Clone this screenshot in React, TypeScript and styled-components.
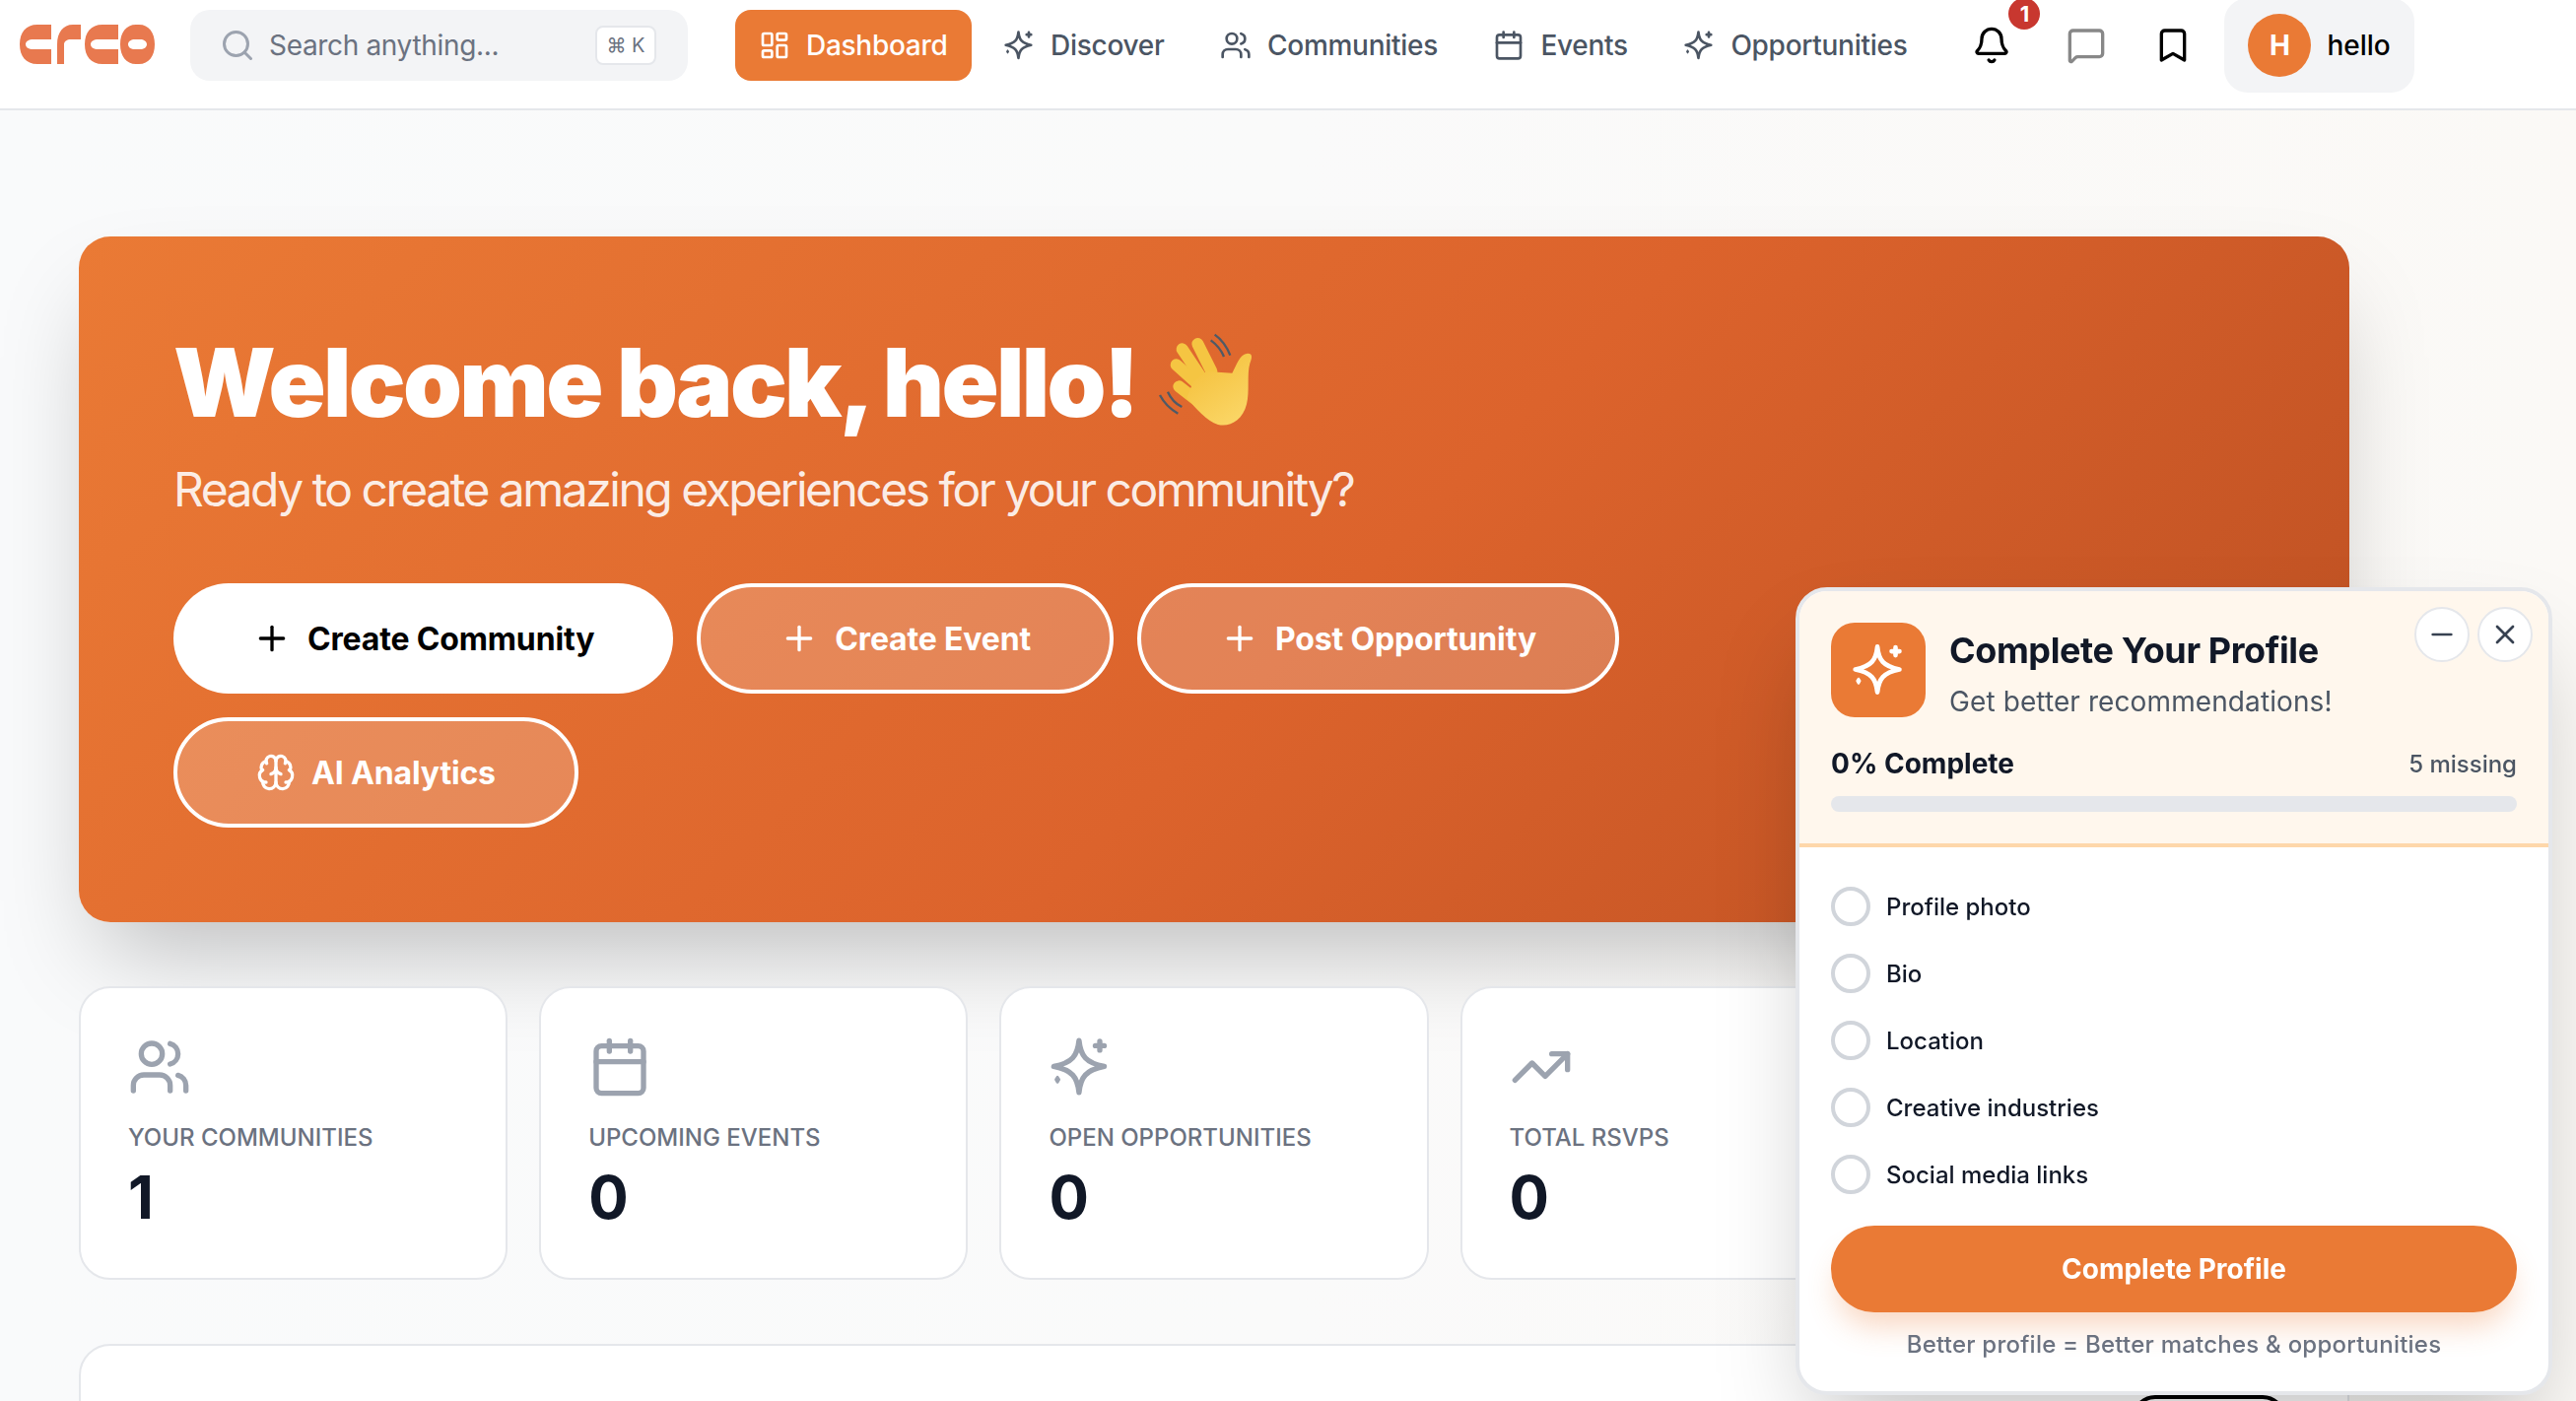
import React, { FC, ReactElement, ReactNode } from "react"
import styled, { createGlobalStyle } from "styled-components"
import { Bell, Bookmark, Brain, Calendar, LayoutDashboard, MessageSquare, Minus, Plus, Search, TrendingUp, Users, X } from "lucide-react"

const GlobalStyle = createGlobalStyle`
  html, body {
    margin: 0;
    padding: 0;
    height: 100%;
    overflow: hidden;
    background: #fafafa;
    font-family: Inter, "Noto Sans", sans-serif;
  }
  * {
    box-sizing: border-box;
  }
`

const SparkleIcon: FC<{ size: number }> = ({ size }) => (
  <svg viewBox="0 0 24 24" width={size} height={size} fill="none" stroke="currentColor" strokeWidth="2" strokeLinecap="round" strokeLinejoin="round">
    <path d="M11.6 1.9C12.2 7.8 14.2 10.4 21.2 11.8C14.2 13.2 12.2 15.8 11.6 21.7C11 15.8 9 13.2 2 11.8C9 10.4 11 7.8 11.6 1.9Z" />
    <path d="M19.5 2.2v3.4M17.8 3.9h3.4" />
    <path d="M3.4 15.8l.6 1-.6 1-.6-1z" fill="currentColor" strokeWidth="1" />
  </svg>
)

const NAV_ITEMS = [
  { label: "Discover", icon: <SparkleIcon size={32} /> },
  { label: "Communities", icon: <Users size={32} /> },
  { label: "Events", icon: <Calendar size={32} /> },
  { label: "Opportunities", icon: <SparkleIcon size={32} /> },
]

const STATS = [
  { label: "Your Communities", value: "1", icon: <Users size={64} /> },
  { label: "Upcoming Events", value: "0", icon: <Calendar size={64} /> },
  { label: "Open Opportunities", value: "0", icon: <SparkleIcon size={64} /> },
  { label: "Total RSVPs", value: "0", icon: <TrendingUp size={64} /> },
]

const CHECKLIST = ["Profile photo", "Bio", "Location", "Creative industries", "Social media links"]

const Logo: FC = () => (
  <LogoMark viewBox="0 0 140 40" width="140" height="40" aria-label="crco">
    <path d="M32 0H18C6 0 0 8 0 20s6 20 18 20h14V25H14c-5 0-8-2-8-5s3-5 8-5h18z" />
    <path d="M38 40h7V20c0-3 3-5 7-5h10V0h-8C44 0 38 8 38 20z" />
    <path d="M100 0H84C72 0 66 8 66 20s6 20 18 20h16V25H80c-5 0-8-2-8-5s3-5 8-5h20z" />
    <path
      fillRule="evenodd"
      d="M102 20c0-12 6-20 16-20h3c10 0 16 8 16 20s-6 20-16 20h-3c-10 0-16-8-16-20zm8 0c0 3 3 5 7 5h5c4 0 7-2 7-5s-3-5-7-5h-5c-4 0-7 2-7 5z"
    />
  </LogoMark>
)

const WavingHand: FC = () => (
  <HandMark viewBox="0 0 375 345" width="125" height="115">
    <defs>
      <linearGradient id="hand" x1="0.2" y1="0" x2="0.8" y2="1">
        <stop offset="0" stopColor="#f4bf3a" />
        <stop offset="1" stopColor="#fbd768" />
      </linearGradient>
    </defs>
    <g fill="none" stroke="#4f5a66" strokeWidth="7">
      <path d="M215 38c24 17 38 40 47 63" />
      <path d="M203 55c19 14 32 30 40 50" />
      <path d="M48 222c12 23 32 43 55 56" />
      <path d="M72 212c8 18 23 36 43 46" />
    </g>
    <g fill="none" stroke="#f5c542" strokeWidth="36" strokeLinecap="round">
      <path d="M163 66l42 84" />
      <path d="M116 82l60 90" />
      <path d="M98 130l76 68" />
      <path d="M106 196l54 42" />
    </g>
    <path
      fill="url(#hand)"
      d="M190 150l78 5c14-24 22-58 47-60 17 0 13 15 7 30-10 35 0 85-10 125-12 50-52 70-87 62-35-12-65-47-95-82l20-50z"
    />
  </HandMark>
)

const NavLink: FC<{ icon: ReactNode; label: string; active?: boolean }> = ({ icon, label, active }) => (
  <NavItem $active={active}>
    {icon}
    {label}
  </NavItem>
)

export default function App(): ReactElement {
  return (
    <Page>
      <GlobalStyle />
      <Header>
        <Logo />
        <SearchBox>
          <Search size={36} color="#9ca3af" />
          <SearchText>Search anything...</SearchText>
          <Kbd>⌘ K</Kbd>
        </SearchBox>
        <Nav>
          <NavLink active icon={<LayoutDashboard size={32} />} label="Dashboard" />
          {NAV_ITEMS.map((item) => (
            <NavLink key={item.label} icon={item.icon} label={item.label} />
          ))}
        </Nav>
        <IconButton $left={34} $color="#000">
          <Bell size={40} />
          <Badge>1</Badge>
        </IconButton>
        <IconButton $left={40} $color="#888">
          <MessageSquare size={40} />
        </IconButton>
        <IconButton $left={32} $color="#000">
          <Bookmark size={40} />
        </IconButton>
        <ProfileChip>
          <Avatar>H</Avatar>
          hello
        </ProfileChip>
      </Header>

      <Main>
        <Hero>
          <HeroTitle>
            Welcome back, hello!
            <WavingHand />
          </HeroTitle>
          <HeroSubtitle>Ready to create amazing experiences for your community?</HeroSubtitle>
          <HeroActions>
            <HeroButton $primary>
              <Plus size={40} />
              Create Community
            </HeroButton>
            <HeroButton>
              <Plus size={40} />
              Create Event
            </HeroButton>
            <HeroButton>
              <Plus size={40} />
              Post Opportunity
            </HeroButton>
            <HeroButton>
              <Brain size={40} />
              AI Analytics
            </HeroButton>
          </HeroActions>
        </Hero>

        <StatsGrid>
          {STATS.map((stat) => (
            <StatCard key={stat.label}>
              <StatIcon>{stat.icon}</StatIcon>
              <StatLabel>{stat.label}</StatLabel>
              <StatValue>{stat.value}</StatValue>
            </StatCard>
          ))}
        </StatsGrid>

        <SectionCard>
          <OutlineButton />
        </SectionCard>
      </Main>

      <ProfilePanel>
        <PanelHead>
          <PanelControls>
            <RoundButton>
              <Minus size={32} />
            </RoundButton>
            <RoundButton>
              <X size={32} />
            </RoundButton>
          </PanelControls>
          <PanelIntro>
            <PanelIcon>
              <SparkleIcon size={56} />
            </PanelIcon>
            <PanelHeading>
              <PanelTitle>Complete Your Profile</PanelTitle>
              <PanelSubtitle>Get better recommendations!</PanelSubtitle>
            </PanelHeading>
          </PanelIntro>
          <ProgressRow>
            <ProgressLabel>0% Complete</ProgressLabel>
            <MissingLabel>5 missing</MissingLabel>
          </ProgressRow>
          <ProgressTrack />
        </PanelHead>
        <PanelBody>
          <Checklist>
            {CHECKLIST.map((item) => (
              <CheckRow key={item}>
                <CheckCircle />
                {item}
              </CheckRow>
            ))}
          </Checklist>
          <CompleteButton>Complete Profile</CompleteButton>
          <PanelFoot>Better profile = Better matches &amp; opportunities</PanelFoot>
        </PanelBody>
      </ProfilePanel>
    </Page>
  )
}

const Page = styled.div`
  height: 1422px;
  overflow: hidden;
  background: linear-gradient(to right, #f9fafb 0%, #fafafa 50%, #fbf9f6 100%);
`

const Header = styled.header`
  display: flex;
  align-items: flex-start;
  height: 112px;
  padding: 10px 0 0 20px;
  background: #fff;
  border-bottom: 2px solid #e5e7eb;
`

const LogoMark = styled.svg`
  flex-shrink: 0;
  margin: 15px 33px 0 0;
  fill: #e8794f;
`

const SearchBox = styled.div`
  display: flex;
  align-items: center;
  gap: 14px;
  width: 505px;
  height: 72px;
  padding: 0 32px 0 30px;
  margin-right: 48px;
  background: #f3f4f6;
  border-radius: 20px;
`

const SearchText = styled.span`
  flex: 1;
  font-size: 28px;
  letter-spacing: -0.012em;
  color: #6b7280;
`

const Kbd = styled.span`
  display: flex;
  align-items: center;
  justify-content: center;
  width: 62px;
  height: 40px;
  background: #fff;
  border: 2px solid #e5e7eb;
  border-radius: 8px;
  font-size: 20px;
  color: #6b7280;
`

const Nav = styled.nav`
  display: flex;
  gap: 8.5px;
`

const NavItem = styled.a<{ $active?: boolean }>`
  display: flex;
  align-items: center;
  gap: 16px;
  height: 72px;
  padding: 0 24px;
  border-radius: 16px;
  font-size: 28px;
  font-weight: 500;
  letter-spacing: -0.01em;
  color: ${({ $active }) => ($active ? "#fff" : "#4b5563")};
  background: ${({ $active }) => ($active ? "#ea7a35" : "transparent")};
`

const IconButton = styled.button<{ $left: number; $color: string }>`
  position: relative;
  display: flex;
  padding: 8px;
  margin: 8px 0 0 ${({ $left }) => $left}px;
  background: transparent;
  border: none;
  color: ${({ $color }) => $color};
`

const Badge = styled.span`
  position: absolute;
  top: -20px;
  left: 45px;
  display: flex;
  align-items: center;
  justify-content: center;
  width: 32px;
  height: 32px;
  border-radius: 50%;
  background: #c8372f;
  color: #fff;
  font-size: 22px;
  font-weight: 700;
  font-family: Inter, sans-serif;
`

const ProfileChip = styled.div`
  display: flex;
  align-items: center;
  gap: 16px;
  height: 96px;
  padding: 0 24px;
  margin: -12px 0 0 24px;
  background: #f3f4f6;
  border-radius: 24px;
  font-size: 28px;
  font-weight: 500;
  color: #000;
`

const Avatar = styled.div`
  display: flex;
  align-items: center;
  justify-content: center;
  width: 64px;
  height: 64px;
  border-radius: 50%;
  background: #ea7a35;
  color: #fff;
  font-size: 28px;
  font-weight: 700;
`

const Main = styled.main`
  width: 2384px;
  padding: 128px 0 0 80px;
`

const Hero = styled.section`
  padding: 96px;
  border-radius: 32px;
  background: linear-gradient(135deg, #ea7a35 0%, #dc632c 55%, #bb4f22 100%);
  box-shadow: 0 50px 100px -24px rgba(0, 0, 0, 0.25);
  color: #fff;
`

const HeroTitle = styled.h1`
  display: flex;
  align-items: center;
  gap: 7px;
  height: 100px;
  padding-top: 4px;
  margin: 0 0 29px;
  font-size: 96px;
  font-weight: 900;
  letter-spacing: -0.028em;
  line-height: 96px;
`

const HandMark = styled.svg`
  flex-shrink: 0;
  margin: -18px 0 -10px;
`

const HeroSubtitle = styled.p`
  margin: 0 0 63px;
  font-size: 48px;
  line-height: 64px;
  color: rgba(255, 255, 255, 0.9);
  letter-spacing: -2.51px;
`

const HeroActions = styled.div`
  display: flex;
  flex-wrap: wrap;
  gap: 24px;
  max-width: 1600px;
`

const HeroButton = styled.button<{ $primary?: boolean }>`
  display: flex;
  align-items: center;
  gap: 16px;
  height: 112px;
  padding: 0 80px;
  border: ${({ $primary }) => ($primary ? "none" : "4px solid #fff")};
  border-radius: 999px;
  font-family: inherit;
  font-size: 32px;
  font-weight: 700;
  letter-spacing: -0.005em;
  color: ${({ $primary }) => ($primary ? "#000" : "#fff")};
  background: ${({ $primary }) => ($primary ? "#fff" : "rgba(255, 255, 255, 0.2)")};
`

const StatsGrid = styled.div`
  display: grid;
  grid-template-columns: repeat(5, 1fr);
  gap: 32px;
  margin-top: 65px;
`

const StatCard = styled.div`
  height: 298px;
  padding: 48px;
  background: #fff;
  border: 2px solid #e5e7eb;
  border-radius: 32px;
`

const StatIcon = styled.div`
  display: flex;
  height: 64px;
  color: #9ca3af;
`

const StatLabel = styled.div`
  margin-top: 22px;
  font-size: 24px;
  line-height: 36px;
  font-weight: 500;
  text-transform: uppercase;
  color: #6b7280;
`

const StatValue = styled.div`
  margin-top: 6px;
  font-size: 60px;
  line-height: 72px;
  font-weight: 700;
  color: #111827;
`

const SectionCard = styled.section`
  display: flex;
  justify-content: flex-end;
  height: 300px;
  margin-top: 65px;
  padding: 50px 62px 0 0;
  background: #fff;
  border: 2px solid #e5e7eb;
  border-radius: 32px;
`

const OutlineButton = styled.div`
  width: 157px;
  height: 80px;
  border: 4px solid #000;
  border-radius: 24px;
`

const ProfilePanel = styled.aside`
  position: fixed;
  right: 24px;
  bottom: 6px;
  width: 768px;
  overflow: hidden;
  background: #fff;
  border: 4px solid #e5e7eb;
  border-radius: 32px;
  box-shadow: 0 50px 100px -24px rgba(0, 0, 0, 0.25);
`

const PanelHead = styled.div`
  position: relative;
  padding: 32px;
  background: #fff7ed;
  border-bottom: 4px solid #fed7aa;
`

const PanelControls = styled.div`
  position: absolute;
  top: 16px;
  right: 16px;
  display: flex;
  gap: 8px;
`

const RoundButton = styled.button`
  display: flex;
  align-items: center;
  justify-content: center;
  width: 56px;
  height: 56px;
  padding: 0;
  background: #fff;
  border: 2px solid #e5e7eb;
  border-radius: 50%;
  color: #374151;
`

const PanelIntro = styled.div`
  display: flex;
  gap: 24px;
  margin-bottom: 28px;
`

const PanelIcon = styled.div`
  display: flex;
  align-items: center;
  justify-content: center;
  width: 96px;
  height: 96px;
  border-radius: 24px;
  background: #ea7a35;
  color: #fff;
`

const PanelHeading = styled.div`
  padding-top: 8px;
`

const PanelTitle = styled.div`
  font-size: 36px;
  line-height: 40px;
  font-weight: 700;
  letter-spacing: -0.011em;
  color: #111827;
`

const PanelSubtitle = styled.div`
  margin-top: 14px;
  font-size: 28px;
  line-height: 36px;
  letter-spacing: 0.1px;
  color: #4b5563;
`

const ProgressRow = styled.div`
  display: flex;
  align-items: center;
  justify-content: space-between;
  height: 34px;
  margin-bottom: 16px;
`

const ProgressLabel = styled.span`
  font-size: 28px;
  font-weight: 700;
  color: #111827;
`

const MissingLabel = styled.span`
  font-size: 24px;
  font-weight: 500;
  color: #4b5563;
`

const ProgressTrack = styled.div`
  height: 16px;
  border-radius: 999px;
  background: #e5e7eb;
`

const PanelBody = styled.div`
  padding: 40px 32px 29px;
`

const Checklist = styled.ul`
  display: flex;
  flex-direction: column;
  gap: 28px;
  margin: 0 0 32px;
  padding: 0;
  list-style: none;
`

const CheckRow = styled.li`
  display: flex;
  align-items: center;
  gap: 16px;
  height: 40px;
  font-size: 24px;
  font-weight: 500;
  color: #111827;
`

const CheckCircle = styled.span`
  width: 40px;
  height: 40px;
  border: 4px solid #d1d5db;
  border-radius: 50%;
`

const CompleteButton = styled.button`
  display: block;
  width: 100%;
  height: 88px;
  border: none;
  border-radius: 999px;
  background: #ea7a35;
  box-shadow: 0 20px 30px -6px rgba(234, 122, 53, 0.3);
  font-family: inherit;
  font-size: 28px;
  font-weight: 700;
  color: #fff;
`

const PanelFoot = styled.div`
  margin-top: 15px;
  font-size: 24px;
  line-height: 36px;
  font-weight: 500;
  letter-spacing: 0.23px;
  text-align: center;
  color: #6b7280;
`
